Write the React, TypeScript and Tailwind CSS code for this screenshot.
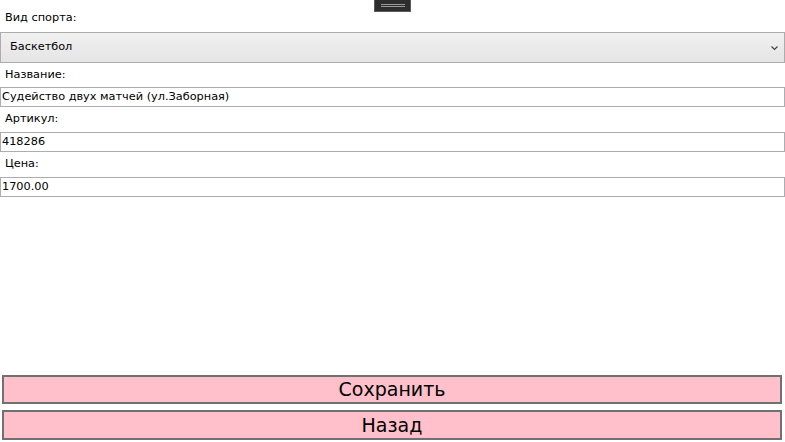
const font = { fontFamily: '"DejaVu Sans", "Liberation Sans", sans-serif' }

function Label({ text, h }: { text: string; h: string }) {
  return (
    <div className={`${h} flex items-center pl-[5px] text-[11.3px] text-black`}>{text}</div>
  )
}

function Field({ value }: { value: string }) {
  return (
    <div className="h-[20px] border border-[#abadb3] bg-white flex items-center pl-[1px] text-[11.3px] text-black">
      {value}
    </div>
  )
}

export default function App() {
  return (
    <div className="relative h-screen w-full bg-white flex flex-col overflow-hidden" style={font}>
      <div className="absolute left-[374px] top-0 w-[37px] h-[12px] bg-[#2d2d2d] border border-[#5a5a5a] border-t-0 flex flex-col items-center justify-center gap-[1px]">
        <div className="w-[24px] h-[1px] bg-[#9a9a9a]" />
        <div className="w-[24px] h-[1px] bg-[#9a9a9a]" />
      </div>

      <div className="h-[32px] flex items-end pb-[5px] pl-[5px] text-[11.3px] text-black">Вид спорта:</div>
      <div className="h-[31px] border border-[#acacac] bg-gradient-to-b from-[#f0f0f0] to-[#e5e5e5] flex items-center justify-between pl-[9px] pr-[6px] text-[11.3px] text-black">
        <span>Баскетбол</span>
        <svg width="7" height="5" viewBox="0 0 7 5" className="mt-[1px]">
          <path d="M0.5 0.5 L3.5 3.5 L6.5 0.5" stroke="#444" strokeWidth="1.2" fill="none" />
        </svg>
      </div>

      <Label text="Название:" h="h-[24px]" />
      <Field value="Судейство двух матчей (ул.Заборная)" />
      <Label text="Артикул:" h="h-[25px]" />
      <Field value="418286" />
      <Label text="Цена:" h="h-[25px]" />
      <Field value="1700.00" />

      <div className="flex-1" />

      <div className="flex flex-col gap-[6px] px-[2px] pb-[2px]">
        <button className="h-[29px] w-[780px] border-2 border-[#707070] bg-[#ffc0cb] text-[19px] text-black leading-none">
          Сохранить
        </button>
        <button className="h-[30px] w-[780px] border-2 border-[#707070] bg-[#ffc0cb] text-[19px] text-black leading-none">
          Назад
        </button>
      </div>
    </div>
  )
}
